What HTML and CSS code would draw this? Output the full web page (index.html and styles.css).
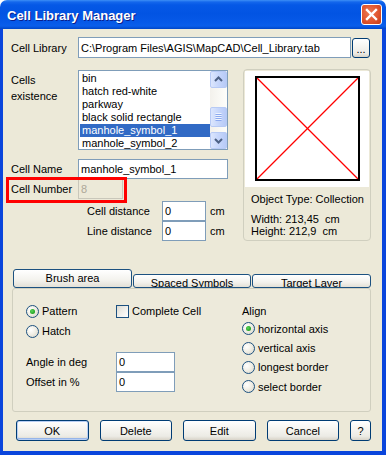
FILE: index.html
```html
<!DOCTYPE html>
<html>
<head>
<meta charset="utf-8">
<title>Cell Library Manager</title>
<link rel="stylesheet" href="styles.css">
</head>
<body>
<div class="win">
  <div class="titlebar">
    <span class="title">Cell Library Manager</span>
    <div class="close"><svg width="19" height="19" viewBox="0 0 19 19"><path d="M5 5L14 14M14 5L5 14" stroke="#fff" stroke-width="2.4" stroke-linecap="square"/></svg></div>
  </div>
  <div class="client">
    <div class="row lib-row">
      <span class="lbl">Cell Library</span>
      <div class="tb path">C:\Program Files\AGIS\MapCAD\Cell_Library.tab</div>
      <button class="btn dots">...</button>
    </div>
    <div class="main">
      <div class="left">
        <div class="cells-row">
          <div class="lbl two">Cells<br>existence</div>
          <div class="listbox">
            <ul class="items">
              <li>bin</li>
              <li>hatch red-white</li>
              <li>parkway</li>
              <li>black solid rectangle</li>
              <li class="sel">manhole_symbol_1</li>
              <li>manhole_symbol_2</li>
            </ul>
            <div class="vscroll">
              <div class="sb-btn"><svg width="15" height="15" viewBox="0 0 15 15"><path d="M4 9L7.5 5.5L11 9" fill="none" stroke="#4D6185" stroke-width="2"/></svg></div>
              <div class="sb-track"><div class="sb-thumb"><svg width="15" height="18" viewBox="0 0 15 18"><path d="M4.5 6.5h6M4.5 8.5h6M4.5 10.5h6M4.5 12.5h6" stroke="#8CA9EF" stroke-width="1"/><path d="M4.5 5.5h6M4.5 7.5h6M4.5 9.5h6M4.5 11.5h6" stroke="#EEF4FE" stroke-width="1"/></svg></div></div>
              <div class="sb-btn"><svg width="15" height="15" viewBox="0 0 15 15"><path d="M4 6L7.5 9.5L11 6" fill="none" stroke="#4D6185" stroke-width="2"/></svg></div>
            </div>
          </div>
        </div>
        <div class="row name-row"><span class="lbl">Cell Name</span><div class="tb name">manhole_symbol_1</div></div>
        <div class="row num-row"><span class="lbl">Cell Number</span><div class="tb num disabled">8</div><div class="mark"></div></div>
        <div class="dist">
          <div class="drow"><span class="dlbl">Cell distance</span><div class="tb small">0</div><span class="unit">cm</span></div>
          <div class="drow"><span class="dlbl">Line distance</span><div class="tb small">0</div><span class="unit">cm</span></div>
        </div>
      </div>
      <div class="preview">
        <div class="canvas">
          <svg width="105" height="105" viewBox="0 0 105 105">
            <line x1="2" y1="2" x2="103" y2="103" stroke="red" stroke-width="1.3"/>
            <line x1="103" y1="2" x2="2" y2="103" stroke="red" stroke-width="1.3"/>
            <rect x="1" y="1" width="103" height="103" fill="none" stroke="#000" stroke-width="2"/>
          </svg>
        </div>
        <div class="info">
          <div class="otype">Object Type: Collection</div>
          <div>Width: 213,45&nbsp; cm</div>
          <div>Height: 212,9&nbsp; cm</div>
        </div>
      </div>
    </div>
    <div class="tabs">
      <div class="tab active">Brush area</div>
      <div class="tab t2">Spaced Symbols</div>
      <div class="tab t3">Target Layer</div>
    </div>
    <div class="panel">
      <div class="pleft">
        <div class="prow">
          <span class="opt"><span class="radio on"></span>Pattern</span>
          <span class="opt"><span class="check"></span>Complete Cell</span>
        </div>
        <div class="prow">
          <span class="opt"><span class="radio"></span>Hatch</span>
        </div>
        <div class="frow first"><span class="flbl">Angle in deg</span><div class="tb field">0</div></div>
        <div class="frow"><span class="flbl">Offset in %</span><div class="tb field">0</div></div>
      </div>
      <div class="pright">
        <div class="align-lbl">Align</div>
        <div class="arow"><span class="radio on"></span>horizontal axis</div>
        <div class="arow"><span class="radio"></span>vertical axis</div>
        <div class="arow"><span class="radio"></span>longest border</div>
        <div class="arow"><span class="radio"></span>select border</div>
      </div>
    </div>
    <div class="buttons">
      <button class="btn act default">OK</button>
      <button class="btn act">Delete</button>
      <button class="btn act">Edit</button>
      <button class="btn act">Cancel</button>
      <button class="btn help">?</button>
    </div>
  </div>
</div>
</body>
</html>
```
FILE: styles.css
```css
* { box-sizing: border-box; }
html, body { margin: 0; padding: 0; background: #fff; }
body { font-family: "Liberation Sans", Arial, sans-serif; font-size: 11px; color: #000; }

.win { width: 386px; height: 455px; display: flex; flex-direction: column; }

.titlebar {
  height: 29px; flex: none; display: flex; align-items: center;
  padding: 0 4px 0 7px; border-radius: 7px 7px 0 0;
  background: linear-gradient(to bottom, #3D8FF6 0px, #1467EC 2px, #0558E6 5px, #0254E3 14px, #0659E8 22px, #0A5EEA 26px, #0046C8 29px);
}
.title { flex: 1; color: #fff; font-weight: bold; font-size: 13px; text-shadow: 1px 1px 0 #0A1F8C; padding-top: 1px; }
.close {
  width: 21px; height: 21px; border: 1px solid #fff; border-radius: 3px;
  background: radial-gradient(circle at 40% 40%, #EC7A55 0%, #E0552E 55%, #C23B17 100%);
  display: flex; align-items: center; justify-content: center;
}
.close svg { display: block; }

.client {
  flex: 1; background: #ECE9D8;
  border-left: 3px solid #0A45DC; border-right: 4px solid #0A45DC; border-bottom: 4px solid #0A45DC;
  padding: 8px 11px 10px 8px;
  display: flex; flex-direction: column;
}

.row { display: flex; align-items: center; }
.lbl { width: 67px; flex: none; white-space: nowrap; }
.tb {
  border: 1px solid #7F9DB9; background: #fff; padding: 0 2px;
  display: flex; align-items: center; white-space: nowrap; overflow: hidden;
}
.lib-row { height: 21px; }
.path { width: 273px; height: 21px; }
.btn {
  font: inherit; color: #000; padding: 0; margin: 0;
  border: 1px solid #003C74; border-radius: 3px;
  background: linear-gradient(to bottom, #FFFFFF 0%, #F6F5F1 40%, #ECEBE5 80%, #D8D3C8 100%);
}
.dots { width: 18px; height: 20px; margin-left: 1px; line-height: 12px; padding-top: 3px; }

.main { display: flex; margin-top: 11px; height: 172px; }
.left { width: 217px; flex: none; }

.cells-row { display: flex; margin-top: 1px; }
.two { line-height: 16px; margin-top: 2px; }
.listbox { width: 150px; height: 80px; border: 1px solid #7F9DB9; background: #fff; display: flex; }
.items { list-style: none; margin: 0; padding: 1px 0 0 1px; flex: 1; overflow: hidden; }
.items li { height: 13px; line-height: 13px; padding-left: 2px; white-space: nowrap; }
.items li.sel { background: #316AC5; color: #fff; }
.vscroll { width: 17px; flex: none; display: flex; flex-direction: column; background: #F5F4EF; }
.sb-btn, .sb-thumb {
  height: 17px; border: 1px solid #B7CAF5; border-radius: 2px;
  background: linear-gradient(to right, #DCE6FD 0%, #C6D6FB 50%, #B7CAF7 100%);
  display: flex; align-items: center; justify-content: center;
}
.sb-btn svg, .sb-thumb svg { display: block; }
.sb-track { flex: 1; background: linear-gradient(to right, #F3F1EC, #FEFEFB); }
.sb-thumb { height: 20px; margin-top: 19px; }

.name-row { margin-top: 9px; height: 20px; }
.name { width: 150px; height: 20px; }
.num-row { height: 20px; position: relative; }
.num { width: 45px; height: 20px; }
.disabled { background: #ECE9D8; color: #ACA899; border-color: #C9C7BA; }
.mark { position: absolute; left: -5px; top: -2px; width: 121px; height: 26px; border: 3px solid #FF0000; }

.dist { margin-top: 2px; padding-left: 76px; }
.drow { display: flex; align-items: center; height: 20px; }
.dlbl { width: 75px; white-space: nowrap; }
.small { width: 44px; height: 20px; }
.unit { margin-left: 4px; }

.preview {
  margin-left: 15px; width: 128px; height: 172px;
  border: 1px solid #D0CFBF; border-radius: 4px; padding: 1px;
}
.canvas { height: 116px; background: #fff; display: flex; justify-content: center; padding-top: 5px; }
.canvas svg { display: block; }
.info { padding: 6px 0 0 6px; line-height: 12px; white-space: nowrap; }
.otype { margin-bottom: 8px; }

.tabs { display: flex; align-items: flex-end; margin-top: 28px; margin-left: 2px; height: 19px; }
.tab {
  height: 14px; line-height: 14px; overflow: hidden; text-align: center; white-space: nowrap;
  border: 1px solid #1C5180; border-radius: 3px;
  background: linear-gradient(to bottom, #FFFFFF, #F3F2ED 60%, #E3E0D6);
  padding-top: 1px;
}
.tab.active { width: 119px; height: 19px; line-height: 17px; padding-top: 0; }
.tab.t2 { width: 118px; margin-left: 1px; }
.tab.t3 { width: 119px; margin-left: 1px; }

.panel {
  margin-left: 1px; width: 359px; height: 124px;
  border: 1px solid #D0CFBF; border-radius: 3px; background: #EDEADB;
  display: flex;
}
.pleft { width: 229px; padding: 12px 0 0 13px; }
.prow { display: grid; grid-template-columns: 90px auto; height: 20px; align-items: center; }
.opt { display: flex; align-items: center; white-space: nowrap; }
.radio {
  width: 13px; height: 13px; border-radius: 50%; flex: none; margin-right: 3px;
  border: 1px solid #1C5180;
  background: radial-gradient(circle at 35% 35%, #FFFFFF 0%, #F1EFE6 45%, #D5D2C6 100%);
  display: inline-flex; align-items: center; justify-content: center;
}
.radio.on::after {
  content: ""; width: 5px; height: 5px; border-radius: 50%;
  background: radial-gradient(circle at 40% 40%, #5BD65B, #21A121 70%, #1A8A1A);
}
.check {
  width: 13px; height: 13px; flex: none; margin-right: 3px;
  border: 1px solid #1C5180;
  background: linear-gradient(135deg, #DCDBD3 0%, #F0EFEA 50%, #FFFFFF 100%);
}
.frow { display: flex; align-items: center; height: 20px; }
.frow.first { margin-top: 11px; }
.flbl { width: 90px; white-space: nowrap; }
.field { width: 59px; height: 20px; }

.pright { padding-top: 14px; }
.align-lbl { line-height: 16px; height: 16px; }
.arow { display: flex; align-items: center; height: 19.4px; white-space: nowrap; }

.buttons { display: flex; margin-top: 8px; margin-left: 5px; height: 21px; }
.act { width: 73px; height: 21px; margin-right: 11px; }
.default { box-shadow: inset 0 0 0 1px #B8CEF3, inset 0 -1px 0 1px #96B5EA; }
.help { width: 21px; height: 21px; }
```
